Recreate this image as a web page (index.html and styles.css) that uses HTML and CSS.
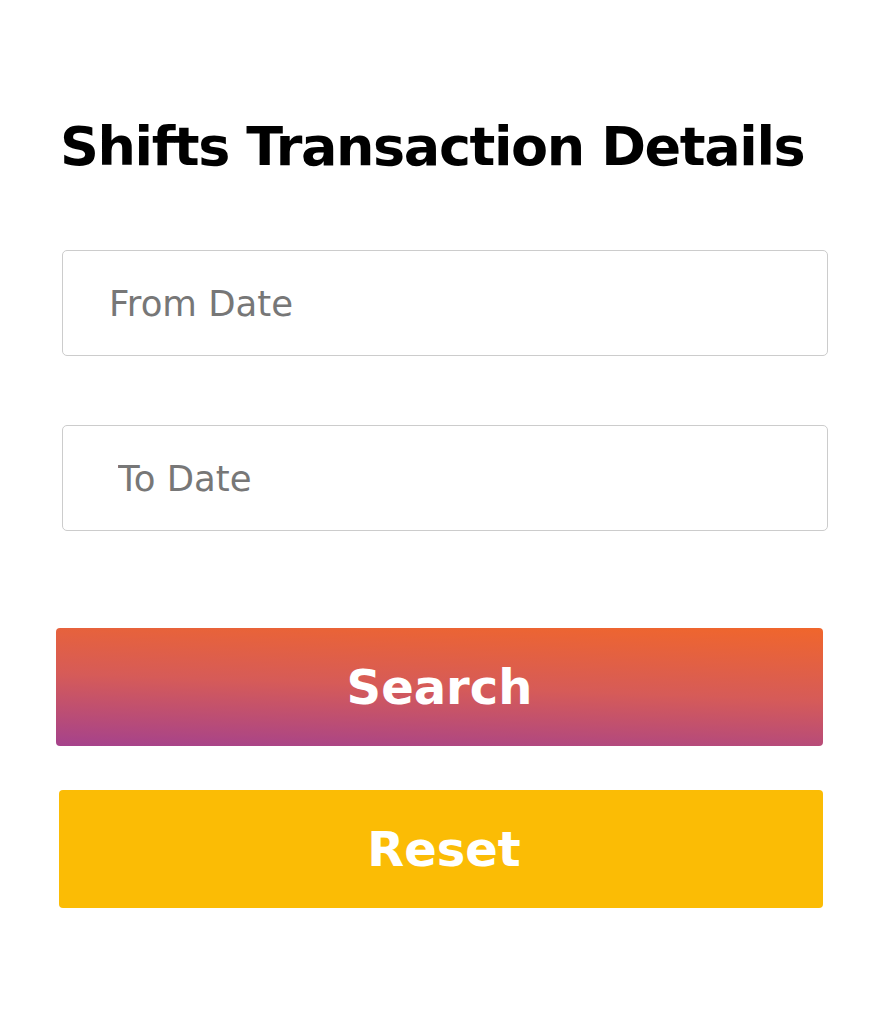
FILE: index.html
```html
<!DOCTYPE html>
<html lang="en">
<head>
    <meta charset="UTF-8">
    <meta name="viewport" content="width=device-width, initial-scale=1.0">
    <title>Shifts Transaction Details</title>
    <link rel="stylesheet" href="styles.css">
</head>
<body>

    <div class="page">
        <h1 class="title">Shifts Transaction Details</h1>

        <!-- Filtro por datas -->
        <form class="filter-form" onsubmit="return false;">
            <input type="text" class="date-input from-date" placeholder="From Date" />
            <input type="text" class="date-input to-date" placeholder="To Date" />

            <button type="submit" class="btn btn-search">Search</button>
            <button type="reset" class="btn btn-reset">Reset</button>
        </form>
    </div>

</body>
</html>
```

FILE: styles.css
```css
body {
    margin: 0;
    background-color: #ffffff;
    font-family: "DejaVu Sans", "Open Sans", sans-serif;
}
.page {
    padding: 110px 0 0 0;
}
.title {
    margin: 0 0 0 60px;
    font-size: 54px;
    letter-spacing: -1.4px;
    font-weight: bold;
    color: #000000;
    line-height: 74px;
}
.filter-form {
    display: flex;
    flex-direction: column;
    align-items: flex-start;
    margin-top: 66px;
}
.date-input {
    box-sizing: border-box;
    width: 766px;
    height: 106px;
    margin-left: 62px;
    border: 1px solid #cccccc;
    border-radius: 5px;
    font-family: inherit;
    font-size: 35.5px;
    color: #333;
    outline: none;
}
.date-input::placeholder {
    color: #777777;
}
.from-date {
    padding-left: 46px;
}
.to-date {
    margin-top: 69px;
    padding-left: 55px;
}
.btn {
    box-sizing: border-box;
    height: 118px;
    padding: 0;
    border: none;
    border-radius: 4px;
    color: #ffffff;
    font-family: inherit;
    font-size: 48px;
    font-weight: bold;
    cursor: pointer;
}
.btn-search {
    margin-top: 97px;
    margin-left: 56px;
    width: 767px;
    background: linear-gradient(182deg, #f0662c 0%, #d65b58 50%, #a5428c 100%);
}
.btn-reset {
    margin-top: 44px;
    margin-left: 59px;
    width: 764px;
    padding-left: 6px;
    background-color: #fbbc05;
}
```
